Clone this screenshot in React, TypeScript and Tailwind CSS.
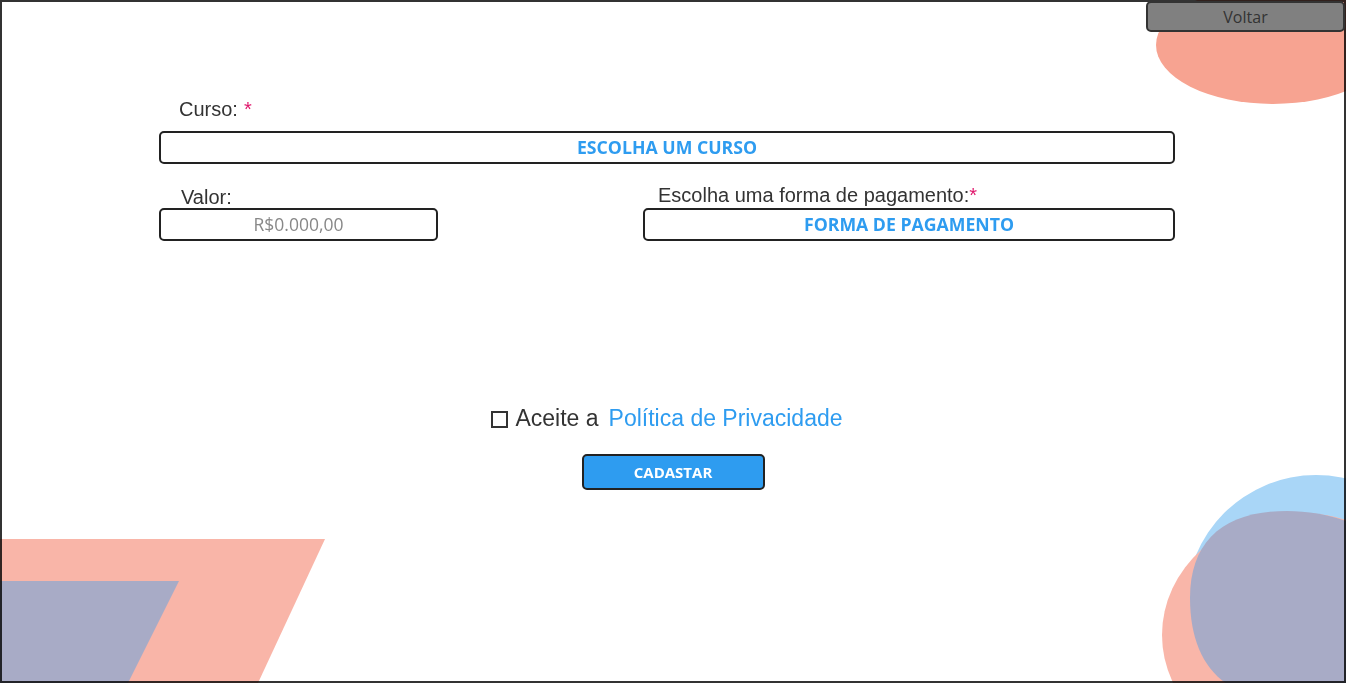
import React from "react";

const label = "font-['Liberation_Sans',Arial,sans-serif] text-[20px] text-[#333]";
const open = "font-['Open_Sans',sans-serif]";

export default function App() {
  return (
    <div className="relative w-[1346px] h-[683px] overflow-hidden bg-white">
      <svg
        className="absolute inset-0"
        width="1346"
        height="683"
        viewBox="0 0 1346 683"
      >
        <ellipse cx="1273" cy="45" rx="117" ry="59" fill="#f7a391" />
        <polygon points="0,539 325,539 258,683 0,683" fill="#f9b5a8" />
        <polygon points="0,581 179,581 128,683 0,683" fill="#a8abc6" />
        <circle cx="1316" cy="605" r="130" fill="#a9d6f7" />
        <ellipse cx="1300" cy="635" rx="138" ry="122" fill="#f9b6a9" />
        <path
          d="M1287 511 C1224 511 1190 541 1190 598 C1190 664 1224 700 1287 700 L1420 700 L1420 580 C1400 540 1345 511 1287 511 Z"
          fill="#a8abc6"
        />
      </svg>

      <div className="relative pt-[98px]">
        <div className="ml-[159px] w-[1016px] flex flex-col">
          <div className={`${label} pl-[20px] h-[23px] leading-[23px] flex`}>
            <span>Curso:</span>
            <span className="ml-[6px] text-[#e0186c]">*</span>
          </div>
          <div
            className={`mt-[10px] h-[33px] border-2 border-[#222] rounded-[5px] flex items-center justify-center ${open} font-bold text-[17.7px] text-[#2e9cf0]`}
          >
            ESCOLHA UM CURSO
          </div>

          <div className="mt-[22px] flex justify-between">
            <div className="w-[279px] flex flex-col">
              <div className={`${label} pl-[22px] h-[22px] leading-[22px]`}>Valor:</div>
              <div
                className={`h-[33px] border-2 border-[#222] rounded-[5px] flex items-center justify-center ${open} text-[17.5px] text-[#888]`}
              >
                R$0.000,00
              </div>
            </div>
            <div className="w-[532px] flex flex-col">
              <div className={`${label} pl-[15px] h-[22px] leading-[18px] flex`}>
                <span>Escolha uma forma de pagamento:</span>
                <span className="text-[#e0186c]">*</span>
              </div>
              <div
                className={`h-[33px] border-2 border-[#222] rounded-[5px] flex items-center justify-center ${open} font-bold text-[17.7px] text-[#2e9cf0]`}
              >
                FORMA DE PAGAMENTO
              </div>
            </div>
          </div>

          <div className="mt-[164px] flex justify-center items-center h-[26px] font-['Liberation_Sans',Arial,sans-serif] text-[23px] leading-[26px]">
            <span className="w-[17px] h-[17px] border-2 border-[#333] mr-[7px] mt-[2px]" />
            <span className="text-[#333]">Aceite a</span>
            <span className="ml-[10px] text-[#2e9cf0]">Política de Privacidade</span>
          </div>
        </div>

        <div className="mt-[23px] flex justify-center">
          <button
            className={`w-[183px] h-[36px] bg-[#2e9cf0] border-2 border-[#222] rounded-[5px] ${open} font-bold text-[15px] text-white flex items-center justify-center`}
          >
            CADASTAR
          </button>
        </div>
      </div>

      <div className="absolute inset-0 border-2 border-[#333] mix-blend-multiply pointer-events-none" />

      <button
        className={`absolute top-[1px] right-[1px] w-[199px] h-[31px] bg-[#808080] border-2 border-[#333] rounded-[5px] ${open} text-[16px] text-[#333] flex items-center justify-center`}
      >
        Voltar
      </button>
    </div>
  );
}
